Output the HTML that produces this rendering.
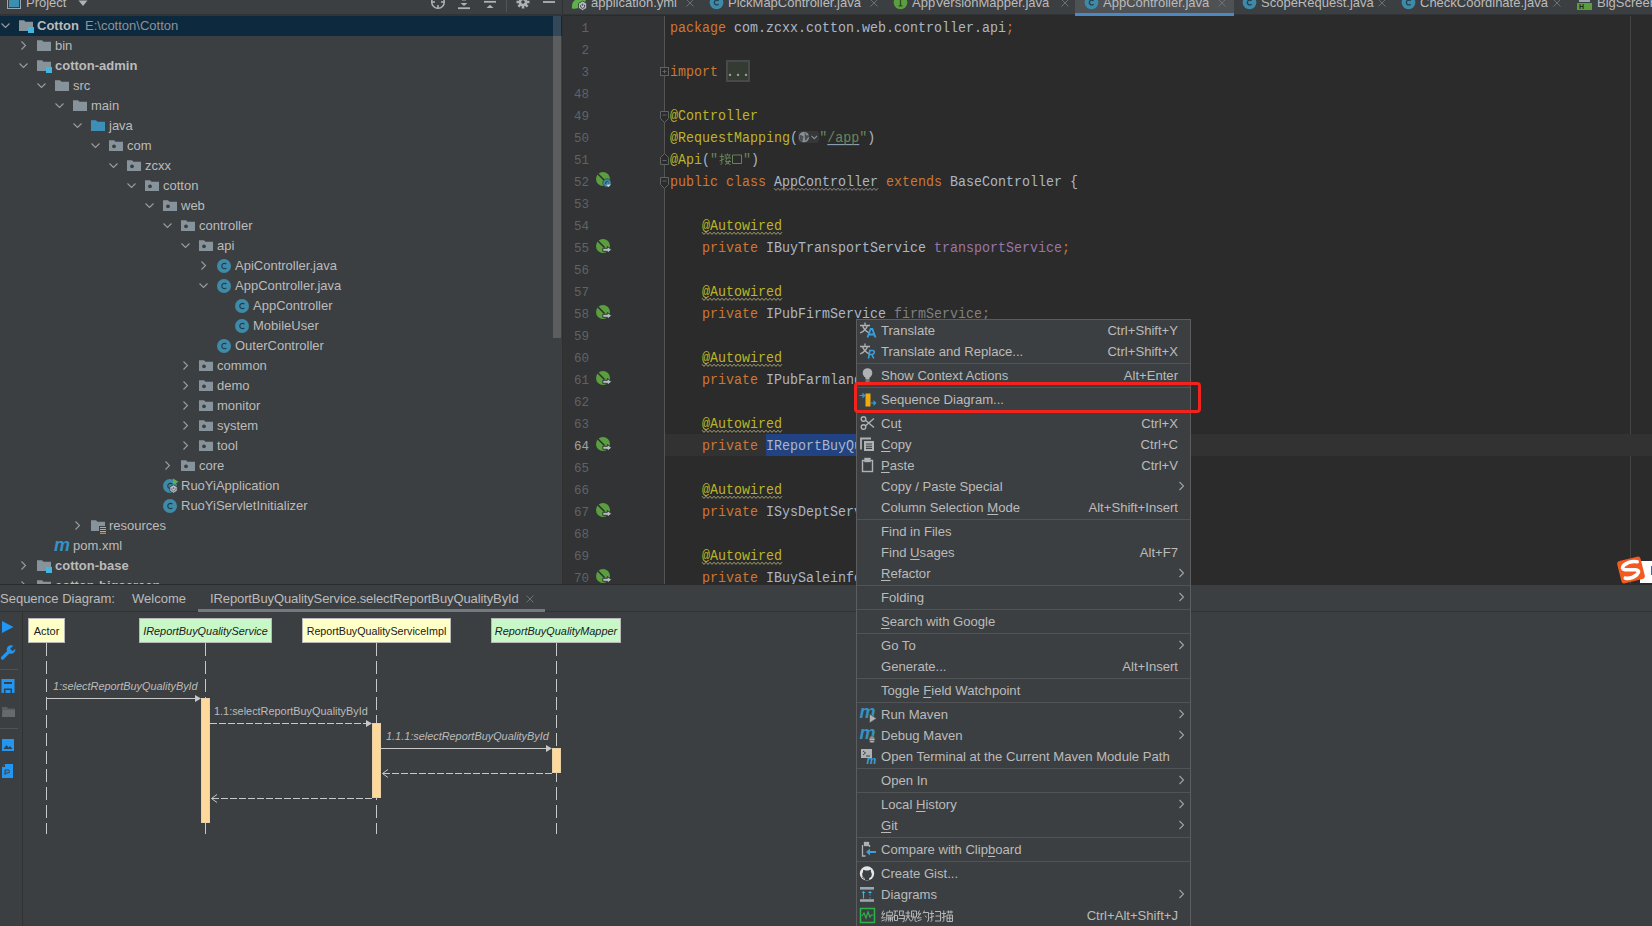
<!DOCTYPE html><html><head><meta charset="utf-8"><style>
*{margin:0;padding:0;box-sizing:border-box}
html,body{width:1652px;height:926px;overflow:hidden;background:#3c3f41;font-family:'Liberation Sans', sans-serif;}
.a{position:absolute}
.t{position:absolute;white-space:pre;font-size:13px;color:#bbbbbb;line-height:20px}
.m{position:absolute;white-space:pre;font-family:'Liberation Mono', monospace;font-size:13.33px;line-height:22px;color:#a9b7c6}
svg{position:absolute;overflow:visible}
</style></head><body>
<div class="a" style="left:0;top:0;width:562px;height:584px;background:#3c3f41;overflow:hidden">
<div class="a" style="left:0;top:0;width:562px;height:15px;background:#3c3f41"></div>
<div class="a" style="left:0;top:14px;width:562px;height:2px;background:#323334"></div>
<div class="a" style="left:7px;top:-5px;width:14px;height:14px;border:1.3px solid #9aa7b0;padding:1px"><div style="width:100%;height:100%;background:#3d8fb0"></div></div>
<div class="t" style="left:26px;top:-6px;line-height:18px">Project</div>
<svg style="left:78px;top:0" width="10" height="7" viewBox="0 0 10 7"><path d="M0.5 0.5h9l-4.5 5.5z" fill="#afb1b3"/></svg>
<svg style="left:428px;top:-6px" width="135" height="20" viewBox="428 -6 135 20"><circle cx="438" cy="2" r="6.3" fill="none" stroke="#afb1b3" stroke-width="1.5"/><path d="M432 2h3M441 2h3M438 5v4" stroke="#afb1b3" stroke-width="1.5"/><path d="M458 8.2h12" stroke="#afb1b3" stroke-width="1.8"/><path d="M460.5 3h7l-3.5 3z" fill="#afb1b3"/><path d="M462 0h4" stroke="#afb1b3" stroke-width="1"/><path d="M484 1.8h12" stroke="#afb1b3" stroke-width="1.8"/><path d="M486.5 8h7l-3.5-3.2z" fill="#afb1b3"/><path d="M506.5 -6v18" stroke="#515355" stroke-width="1"/><g transform="translate(523 2)"><circle r="4.3" fill="#afb1b3"/><path d="M0-6.5v13M-6.5 0h13M-4.6-4.6l9.2 9.2M4.6-4.6l-9.2 9.2" stroke="#afb1b3" stroke-width="2.6"/><circle r="1.8" fill="#3c3f41"/></g><path d="M543 2h12" stroke="#afb1b3" stroke-width="1.8"/></svg>
<div class="a" style="left:0;top:16px;width:562px;height:20px;background:#0d293e"></div>
<svg style="left:0px;top:20px" width="12" height="12" viewBox="0 0 12 12"><path d="M1.5 3.5L5.5 7.5L9.5 3.5" fill="none" stroke="#9a9da0" stroke-width="1.1"/></svg>
<svg style="left:18px;top:17px" width="16" height="16" viewBox="0 0 16 16"><path d="M1 3.2h5l1.5 1.5H15v9.3H1z" fill="#87939a"/><rect x="10" y="10" width="6" height="6" fill="#40b6e0"/></svg>
<div class="t" style="left:37px;top:16px;font-weight:bold;">Cotton</div>
<div class="t" style="left:85px;top:16px;color:#8f9396">E:\cotton\Cotton</div>
<svg style="left:18px;top:40px" width="12" height="12" viewBox="0 0 12 12"><path d="M3.5 1.5L7.5 5.5L3.5 9.5" fill="none" stroke="#9a9da0" stroke-width="1.1"/></svg>
<svg style="left:36px;top:37px" width="16" height="16" viewBox="0 0 16 16"><path d="M1 3.2h5l1.5 1.5H15v9.3H1z" fill="#87939a"/></svg>
<div class="t" style="left:55px;top:36px;">bin</div>
<svg style="left:18px;top:60px" width="12" height="12" viewBox="0 0 12 12"><path d="M1.5 3.5L5.5 7.5L9.5 3.5" fill="none" stroke="#9a9da0" stroke-width="1.1"/></svg>
<svg style="left:36px;top:57px" width="16" height="16" viewBox="0 0 16 16"><path d="M1 3.2h5l1.5 1.5H15v9.3H1z" fill="#87939a"/><rect x="10" y="10" width="6" height="6" fill="#40b6e0"/></svg>
<div class="t" style="left:55px;top:56px;font-weight:bold;">cotton-admin</div>
<svg style="left:36px;top:80px" width="12" height="12" viewBox="0 0 12 12"><path d="M1.5 3.5L5.5 7.5L9.5 3.5" fill="none" stroke="#9a9da0" stroke-width="1.1"/></svg>
<svg style="left:54px;top:77px" width="16" height="16" viewBox="0 0 16 16"><path d="M1 3.2h5l1.5 1.5H15v9.3H1z" fill="#87939a"/></svg>
<div class="t" style="left:73px;top:76px;">src</div>
<svg style="left:54px;top:100px" width="12" height="12" viewBox="0 0 12 12"><path d="M1.5 3.5L5.5 7.5L9.5 3.5" fill="none" stroke="#9a9da0" stroke-width="1.1"/></svg>
<svg style="left:72px;top:97px" width="16" height="16" viewBox="0 0 16 16"><path d="M1 3.2h5l1.5 1.5H15v9.3H1z" fill="#87939a"/></svg>
<div class="t" style="left:91px;top:96px;">main</div>
<svg style="left:72px;top:120px" width="12" height="12" viewBox="0 0 12 12"><path d="M1.5 3.5L5.5 7.5L9.5 3.5" fill="none" stroke="#9a9da0" stroke-width="1.1"/></svg>
<svg style="left:90px;top:117px" width="16" height="16" viewBox="0 0 16 16"><path d="M1 3.2h5l1.5 1.5H15v9.3H1z" fill="#3d8fb8"/></svg>
<div class="t" style="left:109px;top:116px;">java</div>
<svg style="left:90px;top:140px" width="12" height="12" viewBox="0 0 12 12"><path d="M1.5 3.5L5.5 7.5L9.5 3.5" fill="none" stroke="#9a9da0" stroke-width="1.1"/></svg>
<svg style="left:108px;top:137px" width="16" height="16" viewBox="0 0 16 16"><path d="M1 3.2h5l1.5 1.5H15v9.3H1z" fill="#87939a"/><circle cx="6" cy="9.3" r="1.9" fill="#3c3f41"/></svg>
<div class="t" style="left:127px;top:136px;">com</div>
<svg style="left:108px;top:160px" width="12" height="12" viewBox="0 0 12 12"><path d="M1.5 3.5L5.5 7.5L9.5 3.5" fill="none" stroke="#9a9da0" stroke-width="1.1"/></svg>
<svg style="left:126px;top:157px" width="16" height="16" viewBox="0 0 16 16"><path d="M1 3.2h5l1.5 1.5H15v9.3H1z" fill="#87939a"/><circle cx="6" cy="9.3" r="1.9" fill="#3c3f41"/></svg>
<div class="t" style="left:145px;top:156px;">zcxx</div>
<svg style="left:126px;top:180px" width="12" height="12" viewBox="0 0 12 12"><path d="M1.5 3.5L5.5 7.5L9.5 3.5" fill="none" stroke="#9a9da0" stroke-width="1.1"/></svg>
<svg style="left:144px;top:177px" width="16" height="16" viewBox="0 0 16 16"><path d="M1 3.2h5l1.5 1.5H15v9.3H1z" fill="#87939a"/><circle cx="6" cy="9.3" r="1.9" fill="#3c3f41"/></svg>
<div class="t" style="left:163px;top:176px;">cotton</div>
<svg style="left:144px;top:200px" width="12" height="12" viewBox="0 0 12 12"><path d="M1.5 3.5L5.5 7.5L9.5 3.5" fill="none" stroke="#9a9da0" stroke-width="1.1"/></svg>
<svg style="left:162px;top:197px" width="16" height="16" viewBox="0 0 16 16"><path d="M1 3.2h5l1.5 1.5H15v9.3H1z" fill="#87939a"/><circle cx="6" cy="9.3" r="1.9" fill="#3c3f41"/></svg>
<div class="t" style="left:181px;top:196px;">web</div>
<svg style="left:162px;top:220px" width="12" height="12" viewBox="0 0 12 12"><path d="M1.5 3.5L5.5 7.5L9.5 3.5" fill="none" stroke="#9a9da0" stroke-width="1.1"/></svg>
<svg style="left:180px;top:217px" width="16" height="16" viewBox="0 0 16 16"><path d="M1 3.2h5l1.5 1.5H15v9.3H1z" fill="#87939a"/><circle cx="6" cy="9.3" r="1.9" fill="#3c3f41"/></svg>
<div class="t" style="left:199px;top:216px;">controller</div>
<svg style="left:180px;top:240px" width="12" height="12" viewBox="0 0 12 12"><path d="M1.5 3.5L5.5 7.5L9.5 3.5" fill="none" stroke="#9a9da0" stroke-width="1.1"/></svg>
<svg style="left:198px;top:237px" width="16" height="16" viewBox="0 0 16 16"><path d="M1 3.2h5l1.5 1.5H15v9.3H1z" fill="#87939a"/><circle cx="6" cy="9.3" r="1.9" fill="#3c3f41"/></svg>
<div class="t" style="left:217px;top:236px;">api</div>
<svg style="left:198px;top:260px" width="12" height="12" viewBox="0 0 12 12"><path d="M3.5 1.5L7.5 5.5L3.5 9.5" fill="none" stroke="#9a9da0" stroke-width="1.1"/></svg>
<svg style="left:216px;top:258px" width="16" height="16" viewBox="0 0 16 16"><circle cx="8" cy="8" r="7" fill="#3e8aa8"/><path d="M10.4 6.1A2.7 2.7 0 1 0 10.4 9.9" fill="none" stroke="#1f3c4a" stroke-width="1.15"/></svg>
<div class="t" style="left:235px;top:256px;">ApiController.java</div>
<svg style="left:198px;top:280px" width="12" height="12" viewBox="0 0 12 12"><path d="M1.5 3.5L5.5 7.5L9.5 3.5" fill="none" stroke="#9a9da0" stroke-width="1.1"/></svg>
<svg style="left:216px;top:278px" width="16" height="16" viewBox="0 0 16 16"><circle cx="8" cy="8" r="7" fill="#3e8aa8"/><path d="M10.4 6.1A2.7 2.7 0 1 0 10.4 9.9" fill="none" stroke="#1f3c4a" stroke-width="1.15"/></svg>
<div class="t" style="left:235px;top:276px;">AppController.java</div>
<svg style="left:234px;top:298px" width="16" height="16" viewBox="0 0 16 16"><circle cx="8" cy="8" r="7" fill="#3e8aa8"/><path d="M10.4 6.1A2.7 2.7 0 1 0 10.4 9.9" fill="none" stroke="#1f3c4a" stroke-width="1.15"/></svg>
<div class="t" style="left:253px;top:296px;">AppController</div>
<svg style="left:234px;top:318px" width="16" height="16" viewBox="0 0 16 16"><circle cx="8" cy="8" r="7" fill="#3e8aa8"/><path d="M10.4 6.1A2.7 2.7 0 1 0 10.4 9.9" fill="none" stroke="#1f3c4a" stroke-width="1.15"/></svg>
<div class="t" style="left:253px;top:316px;">MobileUser</div>
<svg style="left:216px;top:338px" width="16" height="16" viewBox="0 0 16 16"><circle cx="8" cy="8" r="7" fill="#3e8aa8"/><path d="M10.4 6.1A2.7 2.7 0 1 0 10.4 9.9" fill="none" stroke="#1f3c4a" stroke-width="1.15"/></svg>
<div class="t" style="left:235px;top:336px;">OuterController</div>
<svg style="left:180px;top:360px" width="12" height="12" viewBox="0 0 12 12"><path d="M3.5 1.5L7.5 5.5L3.5 9.5" fill="none" stroke="#9a9da0" stroke-width="1.1"/></svg>
<svg style="left:198px;top:357px" width="16" height="16" viewBox="0 0 16 16"><path d="M1 3.2h5l1.5 1.5H15v9.3H1z" fill="#87939a"/><circle cx="6" cy="9.3" r="1.9" fill="#3c3f41"/></svg>
<div class="t" style="left:217px;top:356px;">common</div>
<svg style="left:180px;top:380px" width="12" height="12" viewBox="0 0 12 12"><path d="M3.5 1.5L7.5 5.5L3.5 9.5" fill="none" stroke="#9a9da0" stroke-width="1.1"/></svg>
<svg style="left:198px;top:377px" width="16" height="16" viewBox="0 0 16 16"><path d="M1 3.2h5l1.5 1.5H15v9.3H1z" fill="#87939a"/><circle cx="6" cy="9.3" r="1.9" fill="#3c3f41"/></svg>
<div class="t" style="left:217px;top:376px;">demo</div>
<svg style="left:180px;top:400px" width="12" height="12" viewBox="0 0 12 12"><path d="M3.5 1.5L7.5 5.5L3.5 9.5" fill="none" stroke="#9a9da0" stroke-width="1.1"/></svg>
<svg style="left:198px;top:397px" width="16" height="16" viewBox="0 0 16 16"><path d="M1 3.2h5l1.5 1.5H15v9.3H1z" fill="#87939a"/><circle cx="6" cy="9.3" r="1.9" fill="#3c3f41"/></svg>
<div class="t" style="left:217px;top:396px;">monitor</div>
<svg style="left:180px;top:420px" width="12" height="12" viewBox="0 0 12 12"><path d="M3.5 1.5L7.5 5.5L3.5 9.5" fill="none" stroke="#9a9da0" stroke-width="1.1"/></svg>
<svg style="left:198px;top:417px" width="16" height="16" viewBox="0 0 16 16"><path d="M1 3.2h5l1.5 1.5H15v9.3H1z" fill="#87939a"/><circle cx="6" cy="9.3" r="1.9" fill="#3c3f41"/></svg>
<div class="t" style="left:217px;top:416px;">system</div>
<svg style="left:180px;top:440px" width="12" height="12" viewBox="0 0 12 12"><path d="M3.5 1.5L7.5 5.5L3.5 9.5" fill="none" stroke="#9a9da0" stroke-width="1.1"/></svg>
<svg style="left:198px;top:437px" width="16" height="16" viewBox="0 0 16 16"><path d="M1 3.2h5l1.5 1.5H15v9.3H1z" fill="#87939a"/><circle cx="6" cy="9.3" r="1.9" fill="#3c3f41"/></svg>
<div class="t" style="left:217px;top:436px;">tool</div>
<svg style="left:162px;top:460px" width="12" height="12" viewBox="0 0 12 12"><path d="M3.5 1.5L7.5 5.5L3.5 9.5" fill="none" stroke="#9a9da0" stroke-width="1.1"/></svg>
<svg style="left:180px;top:457px" width="16" height="16" viewBox="0 0 16 16"><path d="M1 3.2h5l1.5 1.5H15v9.3H1z" fill="#87939a"/><circle cx="6" cy="9.3" r="1.9" fill="#3c3f41"/></svg>
<div class="t" style="left:199px;top:456px;">core</div>
<svg style="left:162px;top:478px" width="16" height="16" viewBox="0 0 16 16"><circle cx="8" cy="8" r="7" fill="#3e8aa8"/><path d="M10.4 6.1A2.7 2.7 0 1 0 10.4 9.9" fill="none" stroke="#1f3c4a" stroke-width="1.15"/></svg>
<svg style="left:162px;top:477px" width="18" height="18" viewBox="0 0 18 18"><path d="M11 1.5l5.5 3.2l-5.5 3.2z" fill="#5fb049"/><path d="M11.5 7.8L15.2 9.9V14.1L11.5 16.2L7.8 14.1V9.9z" fill="#b4bec5" stroke="#3c3f41" stroke-width="0.9"/><path d="M10.3 10.9A1.8 1.8 0 1 0 12.7 10.9M11.5 10v2" fill="none" stroke="#5b6670" stroke-width="0.8"/></svg>
<div class="t" style="left:181px;top:476px;">RuoYiApplication</div>
<svg style="left:162px;top:498px" width="16" height="16" viewBox="0 0 16 16"><circle cx="8" cy="8" r="7" fill="#3e8aa8"/><path d="M10.4 6.1A2.7 2.7 0 1 0 10.4 9.9" fill="none" stroke="#1f3c4a" stroke-width="1.15"/></svg>
<div class="t" style="left:181px;top:496px;">RuoYiServletInitializer</div>
<svg style="left:72px;top:520px" width="12" height="12" viewBox="0 0 12 12"><path d="M3.5 1.5L7.5 5.5L3.5 9.5" fill="none" stroke="#9a9da0" stroke-width="1.1"/></svg>
<svg style="left:90px;top:517px" width="16" height="16" viewBox="0 0 16 16"><path d="M1 3.2h5l1.5 1.5H15v9.3H1z" fill="#87939a"/><rect x="9" y="9" width="8" height="8" fill="#3c3f41"/><path d="M10 10.5h6M10 12.5h6M10 14.5h6M10 16.3h6" stroke="#e0a536" stroke-width="1.1"/></svg>
<div class="t" style="left:109px;top:516px;">resources</div>
<svg style="left:54px;top:538px" width="18" height="16" viewBox="0 0 18 16"><text x="0" y="13" font-family="Liberation Sans" font-weight="bold" font-style="italic" font-size="19" fill="#3592c4" textLength="16" lengthAdjust="spacingAndGlyphs">m</text></svg>
<div class="t" style="left:73px;top:536px;">pom.xml</div>
<svg style="left:18px;top:560px" width="12" height="12" viewBox="0 0 12 12"><path d="M3.5 1.5L7.5 5.5L3.5 9.5" fill="none" stroke="#9a9da0" stroke-width="1.1"/></svg>
<svg style="left:36px;top:557px" width="16" height="16" viewBox="0 0 16 16"><path d="M1 3.2h5l1.5 1.5H15v9.3H1z" fill="#87939a"/><rect x="10" y="10" width="6" height="6" fill="#40b6e0"/></svg>
<div class="t" style="left:55px;top:556px;font-weight:bold;">cotton-base</div>
<svg style="left:18px;top:580px" width="12" height="12" viewBox="0 0 12 12"><path d="M3.5 1.5L7.5 5.5L3.5 9.5" fill="none" stroke="#9a9da0" stroke-width="1.1"/></svg>
<svg style="left:36px;top:577px" width="16" height="16" viewBox="0 0 16 16"><path d="M1 3.2h5l1.5 1.5H15v9.3H1z" fill="#87939a"/><rect x="10" y="10" width="6" height="6" fill="#40b6e0"/></svg>
<div class="t" style="left:55px;top:576px;font-weight:bold;">cotton-bigscreen</div>
<div class="a" style="left:553px;top:16px;width:8px;height:20px;background:#33495a"></div>
<div class="a" style="left:553px;top:36px;width:8px;height:302px;background:#5b5d5f"></div>
</div>
<div class="a" style="left:562px;top:0;width:1px;height:585px;background:#2f3030"></div>
<div class="a" style="left:563px;top:0;width:1089px;height:584px;background:#2b2b2b;overflow:hidden">
<div class="a" style="left:0;top:0;width:1090px;height:15px;background:#3c3f41"></div>
<div class="a" style="left:0;top:14px;width:1089px;height:1px;background:#323334"></div>
<div class="a" style="left:512px;top:0;width:159px;height:13px;background:#4e5254"></div>
<div class="a" style="left:512px;top:13px;width:159px;height:3px;background:#4a88c7"></div>
<svg style="left:8px;top:-4px" width="18" height="16" viewBox="0 0 18 16"><path d="M1 12.5Q0 5 7 2.5Q11 1.5 15 0Q15.5 8 9.5 11Q5 13.5 1 12.5z" fill="#5fb049"/><path d="M11.6 5.1L15.7 7.45V12.15L11.6 14.5L7.5 12.15V7.45z" fill="#b4bec5" stroke="#3c3f41" stroke-width="0.9"/><path d="M10.2 8.6A2.1 2.1 0 1 0 13 8.6M11.6 7.6v2.2" fill="none" stroke="#3c3f41" stroke-width="0.9"/></svg>
<div class="t" style="left:28px;top:-6px;line-height:18px">application.yml</div>
<svg style="left:123px;top:-1px" width="8" height="8" viewBox="0 0 8 8"><path d="M0.5 0.5L7.5 7.5M7.5 0.5L0.5 7.5" stroke="#6e7073" stroke-width="1"/></svg>
<svg style="left:146px;top:-5px" width="15" height="15" viewBox="0 0 16 16"><circle cx="8" cy="8" r="7.3" fill="#3e8aa8"/><path d="M10.2 6.2A2.6 2.6 0 1 0 10.2 9.8" fill="none" stroke="#23404e" stroke-width="1.4"/></svg>
<div class="t" style="left:165px;top:-6px;line-height:18px">PickMapController.java</div>
<svg style="left:307px;top:-1px" width="8" height="8" viewBox="0 0 8 8"><path d="M0.5 0.5L7.5 7.5M7.5 0.5L0.5 7.5" stroke="#6e7073" stroke-width="1"/></svg>
<svg style="left:330px;top:-5px" width="15" height="15" viewBox="0 0 16 16"><circle cx="8" cy="8" r="7.3" fill="#5a9e3f"/><path d="M6 4.5h4M8 4.5v7M6 11.5h4" stroke="#2f4a22" stroke-width="1.4"/></svg>
<div class="t" style="left:349px;top:-6px;line-height:18px">AppVersionMapper.java</div>
<svg style="left:498px;top:-1px" width="8" height="8" viewBox="0 0 8 8"><path d="M0.5 0.5L7.5 7.5M7.5 0.5L0.5 7.5" stroke="#6e7073" stroke-width="1"/></svg>
<svg style="left:521px;top:-5px" width="15" height="15" viewBox="0 0 16 16"><circle cx="8" cy="8" r="7.3" fill="#3e8aa8"/><path d="M10.2 6.2A2.6 2.6 0 1 0 10.2 9.8" fill="none" stroke="#23404e" stroke-width="1.4"/></svg>
<div class="t" style="left:540px;top:-6px;line-height:18px">AppController.java</div>
<svg style="left:655px;top:-1px" width="8" height="8" viewBox="0 0 8 8"><path d="M0.5 0.5L7.5 7.5M7.5 0.5L0.5 7.5" stroke="#6e7073" stroke-width="1"/></svg>
<svg style="left:679px;top:-5px" width="15" height="15" viewBox="0 0 16 16"><circle cx="8" cy="8" r="7.3" fill="#3e8aa8"/><path d="M10.2 6.2A2.6 2.6 0 1 0 10.2 9.8" fill="none" stroke="#23404e" stroke-width="1.4"/></svg>
<div class="t" style="left:698px;top:-6px;line-height:18px">ScopeRequest.java</div>
<svg style="left:815px;top:-1px" width="8" height="8" viewBox="0 0 8 8"><path d="M0.5 0.5L7.5 7.5M7.5 0.5L0.5 7.5" stroke="#6e7073" stroke-width="1"/></svg>
<svg style="left:838px;top:-5px" width="15" height="15" viewBox="0 0 16 16"><circle cx="8" cy="8" r="7.3" fill="#3e8aa8"/><path d="M10.2 6.2A2.6 2.6 0 1 0 10.2 9.8" fill="none" stroke="#23404e" stroke-width="1.4"/></svg>
<div class="t" style="left:857px;top:-6px;line-height:18px">CheckCoordinate.java</div>
<svg style="left:990px;top:-1px" width="8" height="8" viewBox="0 0 8 8"><path d="M0.5 0.5L7.5 7.5M7.5 0.5L0.5 7.5" stroke="#6e7073" stroke-width="1"/></svg>
<div class="a" style="left:1014px;top:3px;width:15px;height:7px;background:#5a9e3f;color:#1e2a18;font:bold 7px/7px 'Liberation Sans', sans-serif;padding-left:2px">H</div>
<div class="a" style="left:1016px;top:0;width:11px;height:2px;background:#9aa7b0"></div>
<div class="t" style="left:1034px;top:-6px;line-height:18px">BigScreen</div>
<div class="a" style="left:0;top:16px;width:101px;height:568px;background:#313335"></div>
<div class="a" style="left:101px;top:16px;width:1px;height:568px;background:#555555"></div>
<div class="a" style="left:1067px;top:16px;width:1px;height:568px;background:#454545"></div>
<div class="m" style="left:0;top:18px;width:26px;text-align:right;font-size:12.5px;color:#606366">1</div>
<div class="m" style="left:107px;top:18px;transform:scaleY(1.15);transform-origin:0 16px"><span style="color:#cc7832;">package </span><span style="color:#a9b7c6;">com.zcxx.cotton.web.controller.api</span><span style="color:#cc7832;">;</span></div>
<div class="m" style="left:0;top:40px;width:26px;text-align:right;font-size:12.5px;color:#606366">2</div>
<div class="m" style="left:0;top:62px;width:26px;text-align:right;font-size:12.5px;color:#606366">3</div>
<div class="a" style="left:163px;top:60px;width:24px;height:22px;background:#333b33;border:2px solid #47494b"></div>
<div class="m" style="left:107px;top:62px;transform:scaleY(1.15);transform-origin:0 16px"><span style="color:#cc7832;">import </span><span style="color:#a9b7c6;">...</span></div>
<div class="m" style="left:0;top:84px;width:26px;text-align:right;font-size:12.5px;color:#606366">48</div>
<div class="m" style="left:0;top:106px;width:26px;text-align:right;font-size:12.5px;color:#606366">49</div>
<div class="m" style="left:107px;top:106px;transform:scaleY(1.15);transform-origin:0 16px"><span style="color:#bbb529;">@Controller</span></div>
<div class="m" style="left:0;top:128px;width:26px;text-align:right;font-size:12.5px;color:#606366">50</div>
<div class="m" style="left:107px;top:128px;transform:scaleY(1.15);transform-origin:0 16px"><span style="color:#bbb529;">@RequestMapping</span><span style="color:#a9b7c6;">(</span><span style="display:inline-block;width:21.3px"></span><span style="color:#6a8759;">"</span><span style="color:#6a8759;text-decoration:underline;text-decoration-color:#8c9bb5;text-decoration-skip-ink:none;text-underline-offset:2px">/app</span><span style="color:#6a8759;">"</span><span style="color:#a9b7c6;">)</span></div>
<div class="m" style="left:0;top:150px;width:26px;text-align:right;font-size:12.5px;color:#606366">51</div>
<div class="m" style="left:107px;top:150px;transform:scaleY(1.15);transform-origin:0 16px"><span style="color:#bbb529;">@Api</span><span style="color:#a9b7c6;">(</span><span style="color:#6a8759;">"</span><span style="display:inline-block;width:25px"></span><span style="color:#6a8759;">"</span><span style="color:#a9b7c6;">)</span></div>
<div class="m" style="left:0;top:172px;width:26px;text-align:right;font-size:12.5px;color:#606366">52</div>
<div class="m" style="left:107px;top:172px;transform:scaleY(1.15);transform-origin:0 16px"><span style="color:#cc7832;">public class </span><span style="color:#a9b7c6;">AppController</span><span style="color:#cc7832;"> extends </span><span style="color:#a9b7c6;">BaseController {</span></div>
<div class="m" style="left:0;top:194px;width:26px;text-align:right;font-size:12.5px;color:#606366">53</div>
<div class="m" style="left:0;top:216px;width:26px;text-align:right;font-size:12.5px;color:#606366">54</div>
<div class="m" style="left:107px;top:216px;transform:scaleY(1.15);transform-origin:0 16px">    <span style="color:#bbb529;">@Autowired</span></div>
<div class="m" style="left:0;top:238px;width:26px;text-align:right;font-size:12.5px;color:#606366">55</div>
<div class="m" style="left:107px;top:238px;transform:scaleY(1.15);transform-origin:0 16px">    <span style="color:#cc7832;">private </span><span style="color:#a9b7c6;">IBuyTransportService </span><span style="color:#9876aa;">transportService</span><span style="color:#cc7832;">;</span></div>
<div class="m" style="left:0;top:260px;width:26px;text-align:right;font-size:12.5px;color:#606366">56</div>
<div class="m" style="left:0;top:282px;width:26px;text-align:right;font-size:12.5px;color:#606366">57</div>
<div class="m" style="left:107px;top:282px;transform:scaleY(1.15);transform-origin:0 16px">    <span style="color:#bbb529;">@Autowired</span></div>
<div class="m" style="left:0;top:304px;width:26px;text-align:right;font-size:12.5px;color:#606366">58</div>
<div class="m" style="left:107px;top:304px;transform:scaleY(1.15);transform-origin:0 16px">    <span style="color:#cc7832;">private </span><span style="color:#a9b7c6;">IPubFirmService </span><span style="color:#808080;">firmService</span><span style="color:#808080;">;</span></div>
<div class="m" style="left:0;top:326px;width:26px;text-align:right;font-size:12.5px;color:#606366">59</div>
<div class="m" style="left:0;top:348px;width:26px;text-align:right;font-size:12.5px;color:#606366">60</div>
<div class="m" style="left:107px;top:348px;transform:scaleY(1.15);transform-origin:0 16px">    <span style="color:#bbb529;">@Autowired</span></div>
<div class="m" style="left:0;top:370px;width:26px;text-align:right;font-size:12.5px;color:#606366">61</div>
<div class="m" style="left:107px;top:370px;transform:scaleY(1.15);transform-origin:0 16px">    <span style="color:#cc7832;">private </span><span style="color:#a9b7c6;">IPubFarmlandService </span><span style="color:#9876aa;">farmlandService</span><span style="color:#cc7832;">;</span></div>
<div class="m" style="left:0;top:392px;width:26px;text-align:right;font-size:12.5px;color:#606366">62</div>
<div class="m" style="left:0;top:414px;width:26px;text-align:right;font-size:12.5px;color:#606366">63</div>
<div class="m" style="left:107px;top:414px;transform:scaleY(1.15);transform-origin:0 16px">    <span style="color:#bbb529;">@Autowired</span></div>
<div class="a" style="left:102px;top:434px;width:987px;height:22px;background:#323232"></div>
<div class="a" style="left:203px;top:434px;width:192px;height:22px;background:#214283"></div>
<div class="m" style="left:0;top:436px;width:26px;text-align:right;font-size:12.5px;color:#a4a3a3">64</div>
<div class="m" style="left:107px;top:436px;transform:scaleY(1.15);transform-origin:0 16px">    <span style="color:#cc7832;">private </span><span style="color:#a9b7c6;">IReportBuyQualityService</span><span style="color:#9876aa;"> reportBuyQualityService</span><span style="color:#cc7832;">;</span></div>
<div class="m" style="left:0;top:458px;width:26px;text-align:right;font-size:12.5px;color:#606366">65</div>
<div class="m" style="left:0;top:480px;width:26px;text-align:right;font-size:12.5px;color:#606366">66</div>
<div class="m" style="left:107px;top:480px;transform:scaleY(1.15);transform-origin:0 16px">    <span style="color:#bbb529;">@Autowired</span></div>
<div class="m" style="left:0;top:502px;width:26px;text-align:right;font-size:12.5px;color:#606366">67</div>
<div class="m" style="left:107px;top:502px;transform:scaleY(1.15);transform-origin:0 16px">    <span style="color:#cc7832;">private </span><span style="color:#a9b7c6;">ISysDeptService </span><span style="color:#9876aa;">deptService</span><span style="color:#cc7832;">;</span></div>
<div class="m" style="left:0;top:524px;width:26px;text-align:right;font-size:12.5px;color:#606366">68</div>
<div class="m" style="left:0;top:546px;width:26px;text-align:right;font-size:12.5px;color:#606366">69</div>
<div class="m" style="left:107px;top:546px;transform:scaleY(1.15);transform-origin:0 16px">    <span style="color:#bbb529;">@Autowired</span></div>
<div class="m" style="left:0;top:568px;width:26px;text-align:right;font-size:12.5px;color:#606366">70</div>
<div class="m" style="left:107px;top:568px;transform:scaleY(1.15);transform-origin:0 16px">    <span style="color:#cc7832;">private </span><span style="color:#a9b7c6;">IBuySaleinfoService </span><span style="color:#9876aa;">saleinfoService</span><span style="color:#cc7832;">;</span></div>
<svg style="left:0;top:0" width="1089" height="584"><polyline points="139,232.2 141,234.39999999999998 143,232.2 145,234.39999999999998 147,232.2 149,234.39999999999998 151,232.2 153,234.39999999999998 155,232.2 157,234.39999999999998 159,232.2 161,234.39999999999998 163,232.2 165,234.39999999999998 167,232.2 169,234.39999999999998 171,232.2 173,234.39999999999998 175,232.2 177,234.39999999999998 179,232.2 181,234.39999999999998 183,232.2 185,234.39999999999998 187,232.2 189,234.39999999999998 191,232.2 193,234.39999999999998 195,232.2 197,234.39999999999998 199,232.2 201,234.39999999999998 203,232.2 205,234.39999999999998 207,232.2 209,234.39999999999998 211,232.2 213,234.39999999999998 215,232.2 217,234.39999999999998 219,232.2" fill="none" stroke="#a6a36c" stroke-width="1"/></svg>
<svg style="left:0;top:0" width="1089" height="584"><polyline points="139,298.2 141,300.4 143,298.2 145,300.4 147,298.2 149,300.4 151,298.2 153,300.4 155,298.2 157,300.4 159,298.2 161,300.4 163,298.2 165,300.4 167,298.2 169,300.4 171,298.2 173,300.4 175,298.2 177,300.4 179,298.2 181,300.4 183,298.2 185,300.4 187,298.2 189,300.4 191,298.2 193,300.4 195,298.2 197,300.4 199,298.2 201,300.4 203,298.2 205,300.4 207,298.2 209,300.4 211,298.2 213,300.4 215,298.2 217,300.4 219,298.2" fill="none" stroke="#a6a36c" stroke-width="1"/></svg>
<svg style="left:0;top:0" width="1089" height="584"><polyline points="139,364.2 141,366.4 143,364.2 145,366.4 147,364.2 149,366.4 151,364.2 153,366.4 155,364.2 157,366.4 159,364.2 161,366.4 163,364.2 165,366.4 167,364.2 169,366.4 171,364.2 173,366.4 175,364.2 177,366.4 179,364.2 181,366.4 183,364.2 185,366.4 187,364.2 189,366.4 191,364.2 193,366.4 195,364.2 197,366.4 199,364.2 201,366.4 203,364.2 205,366.4 207,364.2 209,366.4 211,364.2 213,366.4 215,364.2 217,366.4 219,364.2" fill="none" stroke="#a6a36c" stroke-width="1"/></svg>
<svg style="left:0;top:0" width="1089" height="584"><polyline points="139,430.2 141,432.4 143,430.2 145,432.4 147,430.2 149,432.4 151,430.2 153,432.4 155,430.2 157,432.4 159,430.2 161,432.4 163,430.2 165,432.4 167,430.2 169,432.4 171,430.2 173,432.4 175,430.2 177,432.4 179,430.2 181,432.4 183,430.2 185,432.4 187,430.2 189,432.4 191,430.2 193,432.4 195,430.2 197,432.4 199,430.2 201,432.4 203,430.2 205,432.4 207,430.2 209,432.4 211,430.2 213,432.4 215,430.2 217,432.4 219,430.2" fill="none" stroke="#a6a36c" stroke-width="1"/></svg>
<svg style="left:0;top:0" width="1089" height="584"><polyline points="139,496.2 141,498.4 143,496.2 145,498.4 147,496.2 149,498.4 151,496.2 153,498.4 155,496.2 157,498.4 159,496.2 161,498.4 163,496.2 165,498.4 167,496.2 169,498.4 171,496.2 173,498.4 175,496.2 177,498.4 179,496.2 181,498.4 183,496.2 185,498.4 187,496.2 189,498.4 191,496.2 193,498.4 195,496.2 197,498.4 199,496.2 201,498.4 203,496.2 205,498.4 207,496.2 209,498.4 211,496.2 213,498.4 215,496.2 217,498.4 219,496.2" fill="none" stroke="#a6a36c" stroke-width="1"/></svg>
<svg style="left:0;top:0" width="1089" height="584"><polyline points="139,562.2 141,564.4000000000001 143,562.2 145,564.4000000000001 147,562.2 149,564.4000000000001 151,562.2 153,564.4000000000001 155,562.2 157,564.4000000000001 159,562.2 161,564.4000000000001 163,562.2 165,564.4000000000001 167,562.2 169,564.4000000000001 171,562.2 173,564.4000000000001 175,562.2 177,564.4000000000001 179,562.2 181,564.4000000000001 183,562.2 185,564.4000000000001 187,562.2 189,564.4000000000001 191,562.2 193,564.4000000000001 195,562.2 197,564.4000000000001 199,562.2 201,564.4000000000001 203,562.2 205,564.4000000000001 207,562.2 209,564.4000000000001 211,562.2 213,564.4000000000001 215,562.2 217,564.4000000000001 219,562.2" fill="none" stroke="#a6a36c" stroke-width="1"/></svg>
<svg style="left:0;top:0" width="1089" height="584"><polyline points="211,188.2 213,190.39999999999998 215,188.2 217,190.39999999999998 219,188.2 221,190.39999999999998 223,188.2 225,190.39999999999998 227,188.2 229,190.39999999999998 231,188.2 233,190.39999999999998 235,188.2 237,190.39999999999998 239,188.2 241,190.39999999999998 243,188.2 245,190.39999999999998 247,188.2 249,190.39999999999998 251,188.2 253,190.39999999999998 255,188.2 257,190.39999999999998 259,188.2 261,190.39999999999998 263,188.2 265,190.39999999999998 267,188.2 269,190.39999999999998 271,188.2 273,190.39999999999998 275,188.2 277,190.39999999999998 279,188.2 281,190.39999999999998 283,188.2 285,190.39999999999998 287,188.2 289,190.39999999999998 291,188.2 293,190.39999999999998 295,188.2 297,190.39999999999998 299,188.2 301,190.39999999999998 303,188.2 305,190.39999999999998 307,188.2 309,190.39999999999998 311,188.2 313,190.39999999999998 315,188.2" fill="none" stroke="#8c8c8c" stroke-width="1"/></svg>
<svg style="left:32.5px;top:172.3px" width="16" height="16" viewBox="0 0 16 16"><circle cx="7" cy="7" r="7" fill="#5a9e3f"/><path d="M2 2L8.5 8.5" stroke="#2b2b2b" stroke-width="1.4"/><circle cx="11" cy="11" r="4.2" fill="#3e8aa8" stroke="#2b2b2b" stroke-width="0.6"/><path d="M12.5 10.2A1.6 1.6 0 1 0 12.5 12" fill="none" stroke="#23404e" stroke-width="1"/><path d="M10 12.5h5l-2.5 2.5z" fill="#cfd8dc"/></svg>
<svg style="left:32.5px;top:239.3px" width="16" height="16" viewBox="0 0 16 16"><circle cx="7" cy="7" r="7" fill="#5a9e3f"/><path d="M2 2L8.5 8.5" stroke="#2b2b2b" stroke-width="1.4"/><path d="M6.8 9.3h4.6v-1.8l4.3 3.3l-4.3 3.3v-1.8h-4.6z" fill="#b4bcc4" stroke="#2b2b2b" stroke-width="0.9"/></svg>
<svg style="left:32.5px;top:305.3px" width="16" height="16" viewBox="0 0 16 16"><circle cx="7" cy="7" r="7" fill="#5a9e3f"/><path d="M2 2L8.5 8.5" stroke="#2b2b2b" stroke-width="1.4"/><path d="M6.8 9.3h4.6v-1.8l4.3 3.3l-4.3 3.3v-1.8h-4.6z" fill="#b4bcc4" stroke="#2b2b2b" stroke-width="0.9"/></svg>
<svg style="left:32.5px;top:371.3px" width="16" height="16" viewBox="0 0 16 16"><circle cx="7" cy="7" r="7" fill="#5a9e3f"/><path d="M2 2L8.5 8.5" stroke="#2b2b2b" stroke-width="1.4"/><path d="M6.8 9.3h4.6v-1.8l4.3 3.3l-4.3 3.3v-1.8h-4.6z" fill="#b4bcc4" stroke="#2b2b2b" stroke-width="0.9"/></svg>
<svg style="left:32.5px;top:437.3px" width="16" height="16" viewBox="0 0 16 16"><circle cx="7" cy="7" r="7" fill="#5a9e3f"/><path d="M2 2L8.5 8.5" stroke="#2b2b2b" stroke-width="1.4"/><path d="M6.8 9.3h4.6v-1.8l4.3 3.3l-4.3 3.3v-1.8h-4.6z" fill="#b4bcc4" stroke="#2b2b2b" stroke-width="0.9"/></svg>
<svg style="left:32.5px;top:503.3px" width="16" height="16" viewBox="0 0 16 16"><circle cx="7" cy="7" r="7" fill="#5a9e3f"/><path d="M2 2L8.5 8.5" stroke="#2b2b2b" stroke-width="1.4"/><path d="M6.8 9.3h4.6v-1.8l4.3 3.3l-4.3 3.3v-1.8h-4.6z" fill="#b4bcc4" stroke="#2b2b2b" stroke-width="0.9"/></svg>
<svg style="left:32.5px;top:569.3px" width="16" height="16" viewBox="0 0 16 16"><circle cx="7" cy="7" r="7" fill="#5a9e3f"/><path d="M2 2L8.5 8.5" stroke="#2b2b2b" stroke-width="1.4"/><path d="M6.8 9.3h4.6v-1.8l4.3 3.3l-4.3 3.3v-1.8h-4.6z" fill="#b4bcc4" stroke="#2b2b2b" stroke-width="0.9"/></svg>
<svg style="left:97px;top:67px" width="10" height="10" viewBox="0 0 10 10"><rect x="0.5" y="0.5" width="8" height="8" fill="#2b2b2b" stroke="#606366"/><path d="M2.5 4.5h4M4.5 2.5v4" stroke="#606366"/></svg>
<div class="a" style="left:235px;top:131px;width:21px;height:12px;background:#353739;border-radius:3px"></div>
<svg style="left:235px;top:131px" width="22" height="12" viewBox="0 0 22 12"><circle cx="6" cy="6" r="5.2" fill="#8a9094"/><path d="M1.5 4.5q2-1 3 0.5q1.5 0 1 1.5q-1.5 1-0.5 2.5l-1 2.2q-2.5-1.5-2.5-5zM6.5 1.2q2 1 1.2 2.5q1.5 1 3 0.3q.5 1 .3 2q-1.5.5-2 2q-.5 1.5-2 1.5" fill="#4a4e52"/><path d="M13.5 4.8l2.8 2.8l2.8-2.8" fill="none" stroke="#8a9094" stroke-width="1.1"/></svg>
<svg style="left:156px;top:153px" width="25" height="13" viewBox="0 0 25 13"><g fill="none" stroke="#6a8759" stroke-width="0.95"><path transform="translate(0 0)" d="M0.5 3.5h4.5M2.8 0.5v10q0 1-1.3 0.8M0.5 8l4.5-2M5.5 2h6M8.5 0.5v1.5M6.5 2.5l.8 2M10.5 2.5l-.8 2M5.5 5h6.5M8 5l-1.5 3.5h5.5M10.5 7q-.5 4-4.5 4.5M7 9.5l4.5 2"/><path transform="translate(12 0)" d="M1.5 2h9v8.5h-9z"/></g></svg>
<svg style="left:97px;top:111px" width="10" height="13" viewBox="0 0 10 13"><path d="M0.5 0.5h8v7l-4 4l-4-4z" fill="#2b2b2b" stroke="#606366"/><path d="M2.5 4h4" stroke="#606366"/></svg>
<svg style="left:97px;top:153px" width="10" height="13" viewBox="0 0 10 13"><path d="M0.5 11.5h8v-7l-4-4l-4 4z" fill="#2b2b2b" stroke="#606366"/><path d="M2.5 7.5h4" stroke="#606366"/></svg>
<svg style="left:97px;top:177px" width="10" height="13" viewBox="0 0 10 13"><path d="M0.5 0.5h8v7l-4 4l-4-4z" fill="#2b2b2b" stroke="#606366"/><path d="M2.5 4h4" stroke="#606366"/></svg>
</div>
<div class="a" style="left:0;top:584px;width:1652px;height:1px;background:#2b2b2b"></div>
<div class="a" style="left:0;top:585px;width:1652px;height:341px;background:#3c3f41"></div>
<div class="a" style="left:0;top:611px;width:1652px;height:1px;background:#323232"></div>
<div class="a" style="left:198px;top:609px;width:347px;height:3px;background:#747a80"></div>
<div class="t" style="left:0;top:589px">Sequence Diagram:</div>
<div class="t" style="left:132px;top:589px">Welcome</div>
<div class="t" style="left:210px;top:589px;letter-spacing:-0.11px">IReportBuyQualityService.selectReportBuyQualityById</div>
<svg style="left:526px;top:595px" width="8" height="8" viewBox="0 0 8 8"><path d="M0.5 0.5L7.5 7.5M7.5 0.5L0.5 7.5" stroke="#6e7073" stroke-width="1"/></svg>
<div class="a" style="left:22px;top:612px;width:1px;height:314px;background:#323232"></div>
<svg style="left:0;top:612px" width="22" height="200" viewBox="0 612 22 200"><path d="M2 621l11.5 6l-11.5 6z" fill="#2196f3"/><path d="M2.5 658L8.5 652" stroke="#2196f3" stroke-width="3.2" stroke-linecap="round"/><circle cx="11" cy="649.5" r="4.3" fill="#2196f3"/><path d="M10.2 648.7L13.5 645.4L16 647.9L12.7 651.2z" fill="#3c3f41"/><rect x="0" y="669" width="18" height="1" fill="#505354"/><rect x="1.5" y="679" width="13" height="14" fill="#2196f3"/><rect x="4" y="682" width="8" height="2" fill="#3c3f41"/><rect x="4" y="688.5" width="8" height="4.5" fill="#3c3f41"/><rect x="5.5" y="690" width="5" height="3" fill="#2196f3"/><path d="M2 707h5l1 1.5h7v8.5h-13z" fill="#5a5d5f"/><path d="M3 710h12v7h-13z" fill="#666a6c"/><rect x="0" y="728" width="18" height="1" fill="#505354"/><rect x="2" y="739" width="12" height="12" fill="#2196f3"/><path d="M3.5 749l3-4l2 2.5l1.5-1.5l2.5 3z" fill="#3c3f41"/><path d="M5 764h8v14h-11v-11z" fill="#2196f3"/><path d="M2 767l3-3v3z" fill="#3c3f41"/><path d="M5 775v-5h3q1.5 0 1.5 1.5q0 1.5-1.5 1.5h-3" fill="none" stroke="#3c3f41" stroke-width="1"/></svg>
<div class="a" style="left:28px;top:618px;width:37px;height:25px;background:#ffffc8;border:1px solid #b8b8b8;font-family:'Liberation Sans', sans-serif;font-size:11px;line-height:24px;color:#202020;text-align:center;white-space:nowrap;">Actor</div>
<div class="a" style="left:139px;top:618px;width:133px;height:25px;background:#c8f8c8;border:1px solid #b8b8b8;font-family:'Liberation Sans', sans-serif;font-size:10.9px;line-height:24px;color:#202020;text-align:center;white-space:nowrap;font-style:italic;">IReportBuyQualityService</div>
<div class="a" style="left:302px;top:618px;width:149px;height:25px;background:#ffffc8;border:1px solid #b8b8b8;font-family:'Liberation Sans', sans-serif;font-size:10.7px;line-height:24px;color:#202020;text-align:center;white-space:nowrap;">ReportBuyQualityServiceImpl</div>
<div class="a" style="left:491px;top:618px;width:130px;height:25px;background:#c8f8c8;border:1px solid #b8b8b8;font-family:'Liberation Sans', sans-serif;font-size:10.9px;line-height:24px;color:#202020;text-align:center;white-space:nowrap;font-style:italic;">ReportBuyQualityMapper</div>
<svg style="left:0;top:0" width="1652" height="926" viewBox="0 0 1652 926"><line x1="46.5" y1="643" x2="46.5" y2="834" stroke="#c8c8c8" stroke-width="1" stroke-dasharray="13 5"/><line x1="205.5" y1="643" x2="205.5" y2="834" stroke="#c8c8c8" stroke-width="1" stroke-dasharray="13 5"/><line x1="376.5" y1="643" x2="376.5" y2="834" stroke="#c8c8c8" stroke-width="1" stroke-dasharray="13 5"/><line x1="556.5" y1="643" x2="556.5" y2="834" stroke="#c8c8c8" stroke-width="1" stroke-dasharray="13 5"/><rect x="201.5" y="698.5" width="8" height="124" fill="#ffd89c" stroke="#e8d0a8" stroke-width="1"/><rect x="372.5" y="723.5" width="8" height="74" fill="#ffd89c" stroke="#e8d0a8" stroke-width="1"/><rect x="552.5" y="748.5" width="8" height="24" fill="#ffd89c" stroke="#e8d0a8" stroke-width="1"/><line x1="47" y1="698.5" x2="196" y2="698.5" stroke="#c8c8c8"/><path d="M201 698.5l-6-3.5v7z" fill="#c8c8c8"/><line x1="210" y1="723.5" x2="367" y2="723.5" stroke="#c8c8c8" stroke-dasharray="7 2"/><path d="M372 723.5l-6-3.5v7z" fill="#c8c8c8"/><line x1="381" y1="748.5" x2="547" y2="748.5" stroke="#c8c8c8"/><path d="M552 748.5l-6-3.5v7z" fill="#c8c8c8"/><line x1="552" y1="773.5" x2="382" y2="773.5" stroke="#c8c8c8" stroke-dasharray="7 2"/><path d="M388 769.5l-5.5 4l5.5 4" fill="none" stroke="#c8c8c8"/><line x1="372" y1="798.5" x2="211" y2="798.5" stroke="#c8c8c8" stroke-dasharray="7 2"/><path d="M217 794.5l-5.5 4l5.5 4" fill="none" stroke="#c8c8c8"/></svg>
<div class="a" style="left:53px;top:679px;font-family:'Liberation Sans', sans-serif;font-size:10.9px;line-height:14px;color:#bbbbbb;white-space:pre;font-style:italic;">1:selectReportBuyQualityById</div>
<div class="a" style="left:214px;top:704px;font-family:'Liberation Sans', sans-serif;font-size:10.9px;line-height:14px;color:#bbbbbb;white-space:pre;">1.1:selectReportBuyQualityById</div>
<div class="a" style="left:386px;top:729px;font-family:'Liberation Sans', sans-serif;font-size:10.9px;line-height:14px;color:#bbbbbb;white-space:pre;font-style:italic;">1.1.1:selectReportBuyQualityById</div>
<div class="a" style="left:1640px;top:561px;width:12px;height:22px;background:#ffffff"></div>
<div class="a" style="left:1651px;top:566px;width:1px;height:9px;background:#1e6fd0"></div>
<svg style="left:1614px;top:554px" width="34" height="32" viewBox="0 0 34 32"><g transform="rotate(-14 17 16)"><rect x="5" y="4.5" width="24" height="23" rx="3" fill="#f25a1f"/><path d="M25 9.5Q18 6.5 11.5 9.5Q7 12 11.5 14.3L21.5 16.8Q26.5 19 21.5 22Q15 25 9.5 22.5" fill="none" stroke="#ffffff" stroke-width="3.6" stroke-linecap="round"/></g></svg>
<div class="a" style="left:856px;top:319px;width:335px;height:620px;background:#3c3f41;border:1px solid #5b5d5f"></div>
<svg style="left:859px;top:322px" width="18" height="17" viewBox="0 0 18 17"><g fill="none" stroke="#afb1b3" stroke-width="1.3"><path d="M1 3.5h10M6 0.5v3M3.5 3.5q1.5 5 7 7.5M8.5 3.5q-1.5 5-7.5 7.5"/></g><path d="M8.5 15.5l3.2-8.5h1.6l3.2 8.5M10 12.5h5" fill="none" stroke="#3d9fd9" stroke-width="1.8"/></svg>
<div class="t" style="left:881px;top:320px;line-height:21px;font-size:13.1px">Translate</div>
<div class="t" style="left:900px;top:320px;width:278px;text-align:right;line-height:21px;font-size:13.1px">Ctrl+Shift+Y</div>
<svg style="left:859px;top:343px" width="18" height="17" viewBox="0 0 18 17"><g fill="none" stroke="#afb1b3" stroke-width="1.3"><path d="M1 3.5h10M6 0.5v3M3.5 3.5q1.5 5 7 7.5M8.5 3.5q-1.5 5-7.5 7.5"/></g><path d="M9.5 15.5l1.3-8h2.7q2.2 0 1.8 2.2q-.3 1.8-2.5 1.8h-2.3M12.8 11.5l2 4" fill="none" stroke="#3d9fd9" stroke-width="1.6"/></svg>
<div class="t" style="left:881px;top:341px;line-height:21px;font-size:13.1px">Translate and Replace...</div>
<div class="t" style="left:900px;top:341px;width:278px;text-align:right;line-height:21px;font-size:13.1px">Ctrl+Shift+X</div>
<div class="a" style="left:857px;top:363px;width:333px;height:1px;background:#515355"></div>
<svg style="left:859px;top:367px" width="18" height="17" viewBox="0 0 18 17"><circle cx="8.5" cy="6" r="4.8" fill="#afb1b3"/><rect x="6.5" y="9" width="4" height="3" fill="#afb1b3"/><path d="M6.5 13h4M6.5 15h4" stroke="#afb1b3" stroke-width="1"/></svg>
<div class="t" style="left:881px;top:365px;line-height:21px;font-size:13.1px">Show Context Actions</div>
<div class="t" style="left:900px;top:365px;width:278px;text-align:right;line-height:21px;font-size:13.1px">Alt+Enter</div>
<div class="a" style="left:857px;top:387px;width:333px;height:1px;background:#515355"></div>
<svg style="left:859px;top:391px" width="18" height="17" viewBox="0 0 18 17"><rect x="6.5" y="2.5" width="5" height="13" fill="#f0ac0c"/><path d="M0.5 4h3v-2.5l3 3l-3 3v-2.5h-3z" fill="#2a9de8"/><path d="M11.5 11.5h3v-2.5l3 3l-3 3v-2.5h-3z" fill="#2a9de8"/></svg>
<div class="t" style="left:881px;top:389px;line-height:21px;font-size:13.1px">Sequence Diagram...</div>
<div class="a" style="left:857px;top:411px;width:333px;height:1px;background:#515355"></div>
<svg style="left:859px;top:415px" width="18" height="17" viewBox="0 0 18 17"><g fill="none" stroke="#afb1b3" stroke-width="1.4"><circle cx="4.5" cy="12" r="2.3"/><circle cx="4.5" cy="4" r="2.3"/><path d="M6.5 5.2L15 12.5M6.5 10.8L15 3.5"/></g></svg>
<div class="t" style="left:881px;top:413px;line-height:21px;font-size:13.1px">Cu<u style="text-underline-offset:2px">t</u></div>
<div class="t" style="left:900px;top:413px;width:278px;text-align:right;line-height:21px;font-size:13.1px">Ctrl+X</div>
<svg style="left:859px;top:436px" width="18" height="17" viewBox="0 0 18 17"><path d="M2 13.5V2.5h10" fill="none" stroke="#afb1b3" stroke-width="1.8"/><rect x="5" y="5" width="10" height="10" fill="#afb1b3"/><path d="M7 8h6M7 10.2h6M7 12.4h6" stroke="#3c3f41" stroke-width="1.1"/></svg>
<div class="t" style="left:881px;top:434px;line-height:21px;font-size:13.1px"><u style="text-underline-offset:2px">C</u>opy</div>
<div class="t" style="left:900px;top:434px;width:278px;text-align:right;line-height:21px;font-size:13.1px">Ctrl+C</div>
<svg style="left:859px;top:457px" width="18" height="17" viewBox="0 0 18 17"><g fill="none" stroke="#afb1b3" stroke-width="1.4"><rect x="3.5" y="3.5" width="10" height="11"/><rect x="6" y="1.5" width="5" height="3" fill="#afb1b3"/></g></svg>
<div class="t" style="left:881px;top:455px;line-height:21px;font-size:13.1px"><u style="text-underline-offset:2px">P</u>aste</div>
<div class="t" style="left:900px;top:455px;width:278px;text-align:right;line-height:21px;font-size:13.1px">Ctrl+V</div>
<div class="t" style="left:881px;top:476px;line-height:21px;font-size:13.1px">Copy / Paste Special</div>
<svg style="left:1178px;top:480.5px" width="8" height="10" viewBox="0 0 8 10"><path d="M1.5 1L5.5 5L1.5 9" fill="none" stroke="#a0a2a4" stroke-width="1.1"/></svg>
<div class="t" style="left:881px;top:497px;line-height:21px;font-size:13.1px">Column Selection <u style="text-underline-offset:2px">M</u>ode</div>
<div class="t" style="left:900px;top:497px;width:278px;text-align:right;line-height:21px;font-size:13.1px">Alt+Shift+Insert</div>
<div class="a" style="left:857px;top:519px;width:333px;height:1px;background:#515355"></div>
<div class="t" style="left:881px;top:521px;line-height:21px;font-size:13.1px">Find in Files</div>
<div class="t" style="left:881px;top:542px;line-height:21px;font-size:13.1px">Find <u style="text-underline-offset:2px">U</u>sages</div>
<div class="t" style="left:900px;top:542px;width:278px;text-align:right;line-height:21px;font-size:13.1px">Alt+F7</div>
<div class="t" style="left:881px;top:563px;line-height:21px;font-size:13.1px"><u style="text-underline-offset:2px">R</u>efactor</div>
<svg style="left:1178px;top:567.5px" width="8" height="10" viewBox="0 0 8 10"><path d="M1.5 1L5.5 5L1.5 9" fill="none" stroke="#a0a2a4" stroke-width="1.1"/></svg>
<div class="a" style="left:857px;top:585px;width:333px;height:1px;background:#515355"></div>
<div class="t" style="left:881px;top:587px;line-height:21px;font-size:13.1px">Folding</div>
<svg style="left:1178px;top:591.5px" width="8" height="10" viewBox="0 0 8 10"><path d="M1.5 1L5.5 5L1.5 9" fill="none" stroke="#a0a2a4" stroke-width="1.1"/></svg>
<div class="a" style="left:857px;top:609px;width:333px;height:1px;background:#515355"></div>
<div class="t" style="left:881px;top:611px;line-height:21px;font-size:13.1px"><u style="text-underline-offset:2px">S</u>earch with Google</div>
<div class="a" style="left:857px;top:633px;width:333px;height:1px;background:#515355"></div>
<div class="t" style="left:881px;top:635px;line-height:21px;font-size:13.1px">Go To</div>
<svg style="left:1178px;top:639.5px" width="8" height="10" viewBox="0 0 8 10"><path d="M1.5 1L5.5 5L1.5 9" fill="none" stroke="#a0a2a4" stroke-width="1.1"/></svg>
<div class="t" style="left:881px;top:656px;line-height:21px;font-size:13.1px">Generate...</div>
<div class="t" style="left:900px;top:656px;width:278px;text-align:right;line-height:21px;font-size:13.1px">Alt+Insert</div>
<div class="a" style="left:857px;top:678px;width:333px;height:1px;background:#515355"></div>
<div class="t" style="left:881px;top:680px;line-height:21px;font-size:13.1px">Toggle <u style="text-underline-offset:2px">F</u>ield Watchpoint</div>
<div class="a" style="left:857px;top:702px;width:333px;height:1px;background:#515355"></div>
<svg style="left:859px;top:706px" width="18" height="17" viewBox="0 0 18 17"><text x="0.5" y="12" font-family="Liberation Sans" font-weight="bold" font-style="italic" font-size="18" fill="#3592c4" textLength="16" lengthAdjust="spacingAndGlyphs">m</text><path d="M10.5 8l7 4.5l-7 4.5z" fill="#afb1b3" stroke="#3c3f41" stroke-width="0.6"/></svg>
<div class="t" style="left:881px;top:704px;line-height:21px;font-size:13.1px">Run Maven</div>
<svg style="left:1178px;top:708.5px" width="8" height="10" viewBox="0 0 8 10"><path d="M1.5 1L5.5 5L1.5 9" fill="none" stroke="#a0a2a4" stroke-width="1.1"/></svg>
<svg style="left:859px;top:727px" width="18" height="17" viewBox="0 0 18 17"><text x="0.5" y="12" font-family="Liberation Sans" font-weight="bold" font-style="italic" font-size="18" fill="#3592c4" textLength="16" lengthAdjust="spacingAndGlyphs">m</text><ellipse cx="13" cy="12.5" rx="3" ry="3.5" fill="#afb1b3" stroke="#3c3f41" stroke-width="0.6"/><path d="M9.5 11h7M9.5 13.5h7" stroke="#3c3f41" stroke-width="0.6"/></svg>
<div class="t" style="left:881px;top:725px;line-height:21px;font-size:13.1px">Debug Maven</div>
<svg style="left:1178px;top:729.5px" width="8" height="10" viewBox="0 0 8 10"><path d="M1.5 1L5.5 5L1.5 9" fill="none" stroke="#a0a2a4" stroke-width="1.1"/></svg>
<svg style="left:859px;top:748px" width="18" height="17" viewBox="0 0 18 17"><rect x="2" y="1" width="11" height="9" fill="#afb1b3"/><path d="M4 3l2.5 2l-2.5 2M7 8h4" fill="none" stroke="#3c3f41" stroke-width="1"/><text x="7.5" y="16" font-family="Liberation Sans" font-weight="bold" font-style="italic" font-size="11" fill="#3d9fd9">m</text></svg>
<div class="t" style="left:881px;top:746px;line-height:21px;font-size:13.1px">Open Terminal at the Current Maven Module Path</div>
<div class="a" style="left:857px;top:768px;width:333px;height:1px;background:#515355"></div>
<div class="t" style="left:881px;top:770px;line-height:21px;font-size:13.1px">Open In</div>
<svg style="left:1178px;top:774.5px" width="8" height="10" viewBox="0 0 8 10"><path d="M1.5 1L5.5 5L1.5 9" fill="none" stroke="#a0a2a4" stroke-width="1.1"/></svg>
<div class="a" style="left:857px;top:792px;width:333px;height:1px;background:#515355"></div>
<div class="t" style="left:881px;top:794px;line-height:21px;font-size:13.1px">Local <u style="text-underline-offset:2px">H</u>istory</div>
<svg style="left:1178px;top:798.5px" width="8" height="10" viewBox="0 0 8 10"><path d="M1.5 1L5.5 5L1.5 9" fill="none" stroke="#a0a2a4" stroke-width="1.1"/></svg>
<div class="t" style="left:881px;top:815px;line-height:21px;font-size:13.1px"><u style="text-underline-offset:2px">G</u>it</div>
<svg style="left:1178px;top:819.5px" width="8" height="10" viewBox="0 0 8 10"><path d="M1.5 1L5.5 5L1.5 9" fill="none" stroke="#a0a2a4" stroke-width="1.1"/></svg>
<div class="a" style="left:857px;top:837px;width:333px;height:1px;background:#515355"></div>
<svg style="left:859px;top:841px" width="18" height="17" viewBox="0 0 18 17"><g fill="none" stroke="#afb1b3" stroke-width="1.3"><path d="M3.5 4v11h3M10.5 4v2"/><rect x="5.5" y="1.5" width="4" height="3" fill="#afb1b3"/></g><path d="M17 10h-6v-2.5l-4 3.5l4 3.5v-2.5h6z" fill="#3d9fd9"/></svg>
<div class="t" style="left:881px;top:839px;line-height:21px;font-size:13.1px">Compare with Clip<u style="text-underline-offset:2px">b</u>oard</div>
<div class="a" style="left:857px;top:861px;width:333px;height:1px;background:#515355"></div>
<svg style="left:859px;top:865px" width="18" height="17" viewBox="0 0 18 17"><circle cx="8" cy="8.5" r="7.2" fill="#e6e6e6"/><path d="M5.8 15.5v-2.6q-2.6-.6-2.6-3.6q0-1.3.9-2.2q-.3-1.2.2-2.4q1.1 0 2.3.9q1.4-.4 2.8 0q1.2-.9 2.3-.9q.5 1.2.2 2.4q.9.9.9 2.2q0 3-2.6 3.6v2.6z" fill="#3c3f41"/><path d="M5.8 13.2q-1.8.3-2.6-1.2" fill="none" stroke="#3c3f41" stroke-width="1"/></svg>
<div class="t" style="left:881px;top:863px;line-height:21px;font-size:13.1px">Create Gist...</div>
<svg style="left:859px;top:886px" width="18" height="17" viewBox="0 0 18 17"><rect x="1" y="1" width="14" height="2.6" fill="#9aa7b0"/><rect x="1" y="13.2" width="14" height="2.6" fill="#9aa7b0"/><path d="M4.5 12.5v-6M11 12.5v-1M11 9.5v-1M11 7.5v-1" fill="none" stroke="#3fb5e8" stroke-width="1.1"/><path d="M2.5 7l2-2l2 2zM9 7l2-2l2 2z" fill="#3fb5e8"/></svg>
<div class="t" style="left:881px;top:884px;line-height:21px;font-size:13.1px">Diagrams</div>
<svg style="left:1178px;top:888.5px" width="8" height="10" viewBox="0 0 8 10"><path d="M1.5 1L5.5 5L1.5 9" fill="none" stroke="#a0a2a4" stroke-width="1.1"/></svg>
<svg style="left:859px;top:907px" width="18" height="17" viewBox="0 0 18 17"><rect x="1.5" y="1.5" width="14" height="14" fill="none" stroke="#2db34a" stroke-width="1.5"/><path d="M3 9l2-3l2 5l2-6l2 5l1.5-2h2" fill="none" stroke="#2db34a" stroke-width="1.2"/></svg>
<svg style="left:881px;top:909.5px" width="73" height="13" viewBox="0 0 73 13"><g fill="none" stroke="#bbbbbb" stroke-width="0.95"><path transform="translate(0 0)" d="M2.5 0.5L0.8 4.2L3.8 3.8M3.8 2.8L0.5 8.2L4.5 7.6M0.5 11l4-1.5M8.5 0.3v1.5M5.8 2.2h5.6v3.2h-5.6M5.8 2.2v4q0 4-1 5.5M6.5 7h5v4.5M7.8 7v4.5M9.5 7v4.5M6.5 9h5"/><path transform="translate(12 0)" d="M0.5 1h4.5M2.5 1q-0.5 4-2 6.5M1.5 5.5h3v5h-3zM6 1h4.5l-0.8 4.5M6.5 1v4.5h5l-0.5 5.5q-0.2 1-1.5 0.8M5.5 8.5h6.5"/><path transform="translate(24 0)" d="M0.5 3h4.5M0.5 6h5M3 0.5v5.5l-2.5 5.5M3 6.5l2.5 4.5M6.5 1h5v6h-5zM8.3 3v4q-0.5 3-2.3 4.5M10 7v3.5q0 1 1.5 1h0.5"/><path transform="translate(36 0)" d="M2.5 0.5L0.8 4.2L3.8 3.8M3.8 2.8L0.5 8.2L4.5 7.6M0.5 11l4-1.5M7.5 0.5l-1.5 3M6.5 2.5h5v7.5q0 1.5-1.5 1.3M8 5.5l1.5 2"/><path transform="translate(48 0)" d="M0.5 3.5h4.5M2.8 0.5v10q0 1-1.3 0.8M0.5 8l4.5-2M6 1.5h5.5v9.5h-5.5M6.5 6h5"/><path transform="translate(60 0)" d="M0.5 3.5h4.5M2.8 0.5v10q0 1-1.3 0.8M0.5 8l4.5-2M5.5 2h6.5M7.5 0.5v3M10 0.5v3M6 5h5.5v6.5h-5.5zM6 8.2h5.5M8.8 5v6.5"/></g></svg>
<div class="t" style="left:900px;top:905px;width:278px;text-align:right;line-height:21px;font-size:13.1px">Ctrl+Alt+Shift+J</div>
<div class="a" style="left:854px;top:382px;width:347px;height:31px;border:3.5px solid #f2231c;border-radius:4px"></div>
</body></html>
